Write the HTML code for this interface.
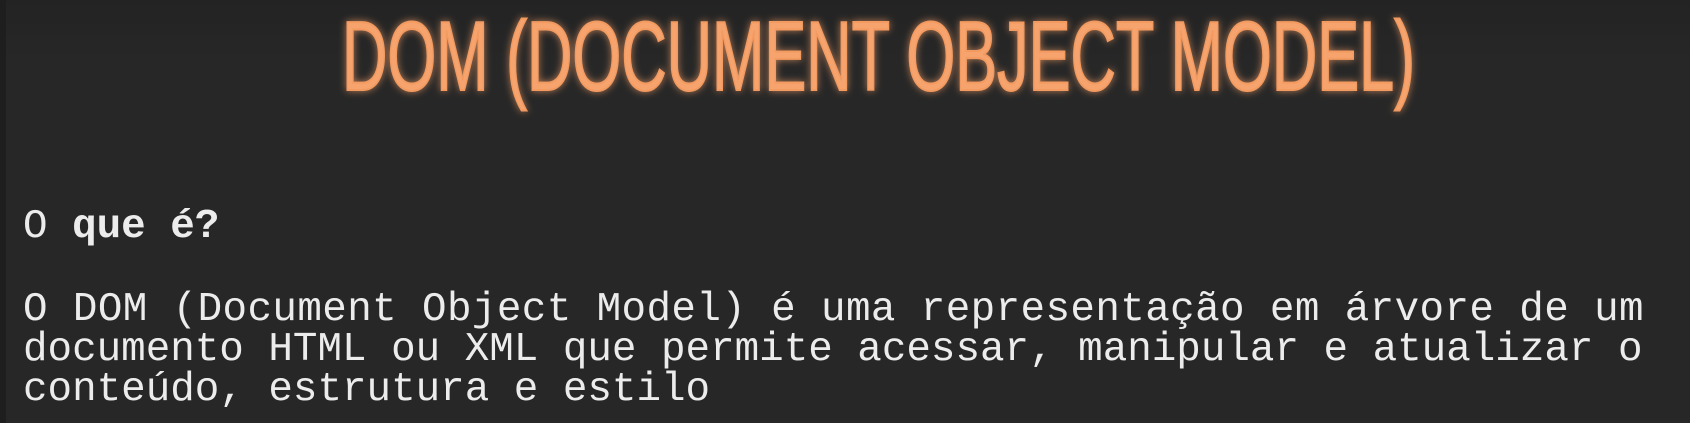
<!DOCTYPE html>
<html><head><meta charset="utf-8"><style>
html,body{margin:0;padding:0;}
body{width:1690px;height:423px;overflow:hidden;background:linear-gradient(#232323,#272727 60px);position:relative;font-family:"Liberation Mono",monospace;color:#ececec;}
.strip{position:absolute;left:0;top:0;width:6px;height:423px;background:#1e1e1e;}
svg{position:absolute;left:0;top:0;}
.t{position:absolute;left:23px;font-size:40.9px;white-space:pre;line-height:40px;}
</style></head><body>
<div class="strip"></div>
<svg width="1690" height="130">
<defs><filter id="g" x="-10%" y="-50%" width="120%" height="200%"><feGaussianBlur stdDeviation="4" result="b"/><feComponentTransfer in="b" result="c"><feFuncA type="linear" slope="0.7"/></feComponentTransfer><feMerge><feMergeNode in="c"/><feMergeNode in="SourceGraphic"/></feMerge></filter></defs>
<text x="342" y="90" textLength="1073" lengthAdjust="spacingAndGlyphs" font-family="Liberation Sans Narrow, Liberation Sans, sans-serif" font-size="98" fill="#f6a36d" filter="url(#g)" stroke="#f29a60" stroke-width="2">DOM (DOCUMENT OBJECT MODEL)</text>
</svg>
<div class="t" style="top:207px">O <b>que é?</b></div>
<div class="t" style="top:290px"><span style="letter-spacing:0.4px">O DOM (Document Object Model) é uma representação em árvore de um</span>
documento HTML ou XML que permite acessar, manipular e atualizar o
conteúdo, estrutura e estilo</div>
</body></html>
